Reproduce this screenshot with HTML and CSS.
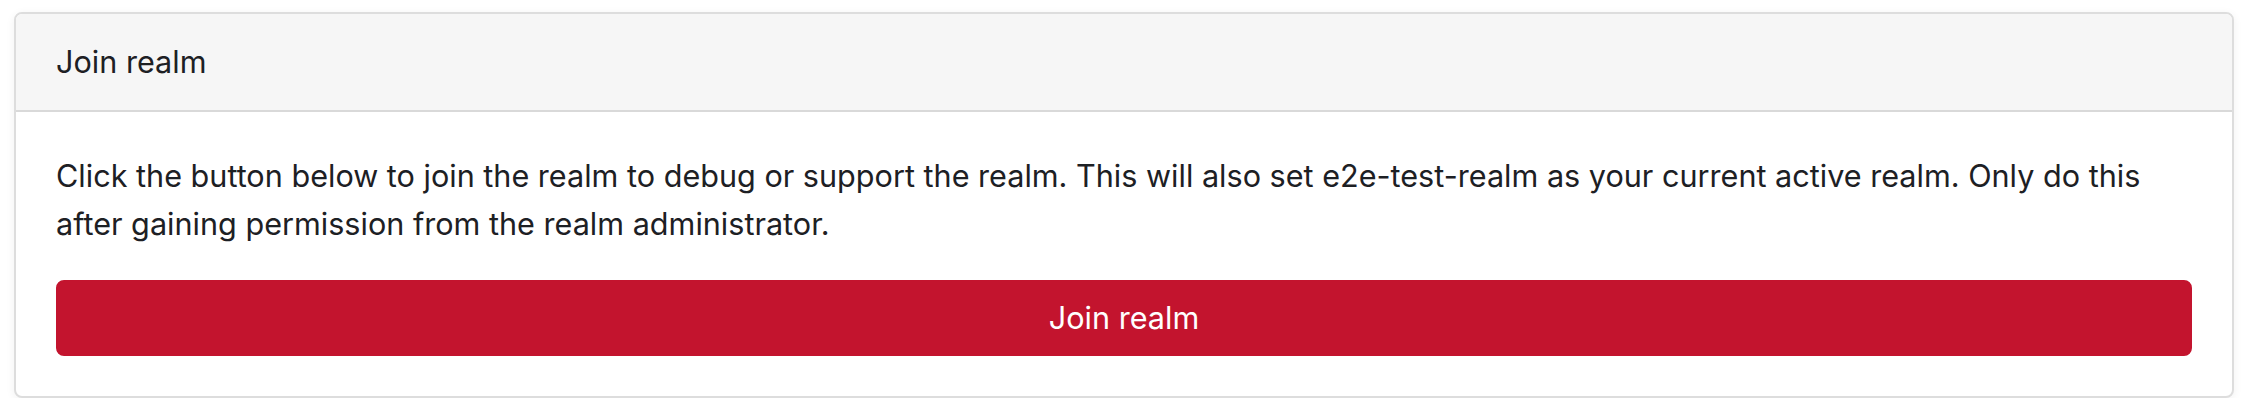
FILE: index.html
```html
<!DOCTYPE html>
<html lang="en">
<head>
<meta charset="utf-8">
<link rel="stylesheet" href="styles.css">
<title>Join realm</title>
</head>
<body>
<div class="page">
  <div class="card">
    <div class="card-header">Join realm</div>
    <div class="card-body">
      <p class="card-text">Click the button below to join the realm to debug or support the realm. This will also set e2e-test-realm as your current active realm. Only do this after gaining permission from the realm administrator.</p>
      <button class="btn-join" type="button">Join realm</button>
    </div>
  </div>
</div>
</body>
</html>
```

FILE: styles.css
```css
html, body {
  margin: 0;
  padding: 0;
  background: #ffffff;
}

body {
  font-family: Inter, "Noto Sans", "Liberation Sans", sans-serif;
  font-size: 30.6px;
  line-height: 48px;
  color: #1d2024;
}

.page {
  padding: 12px 18px 0 14px;
}

.card {
  display: flex;
  flex-direction: column;
  border: 2px solid #dddddd;
  border-radius: 8px;
  background: #ffffff;
  box-shadow: 0 2px 10px rgba(0, 0, 0, 0.06);
  overflow: hidden;
}

.card-header {
  background: #f6f6f6;
  border-bottom: 2px solid #d9d9d9;
  padding: 24px 40px;
}

.card-body {
  display: flex;
  flex-direction: column;
  padding: 40px;
}

.card-text {
  margin: 0 0 32px 0;
}

.btn-join {
  display: block;
  width: 100%;
  font-family: inherit;
  font-size: 30.6px;
  line-height: 48px;
  color: #ffffff;
  background: #c3142e;
  border: 2px solid #c3142e;
  border-radius: 8px;
  padding: 12px 24px;
  text-align: center;
  cursor: pointer;
}
```
